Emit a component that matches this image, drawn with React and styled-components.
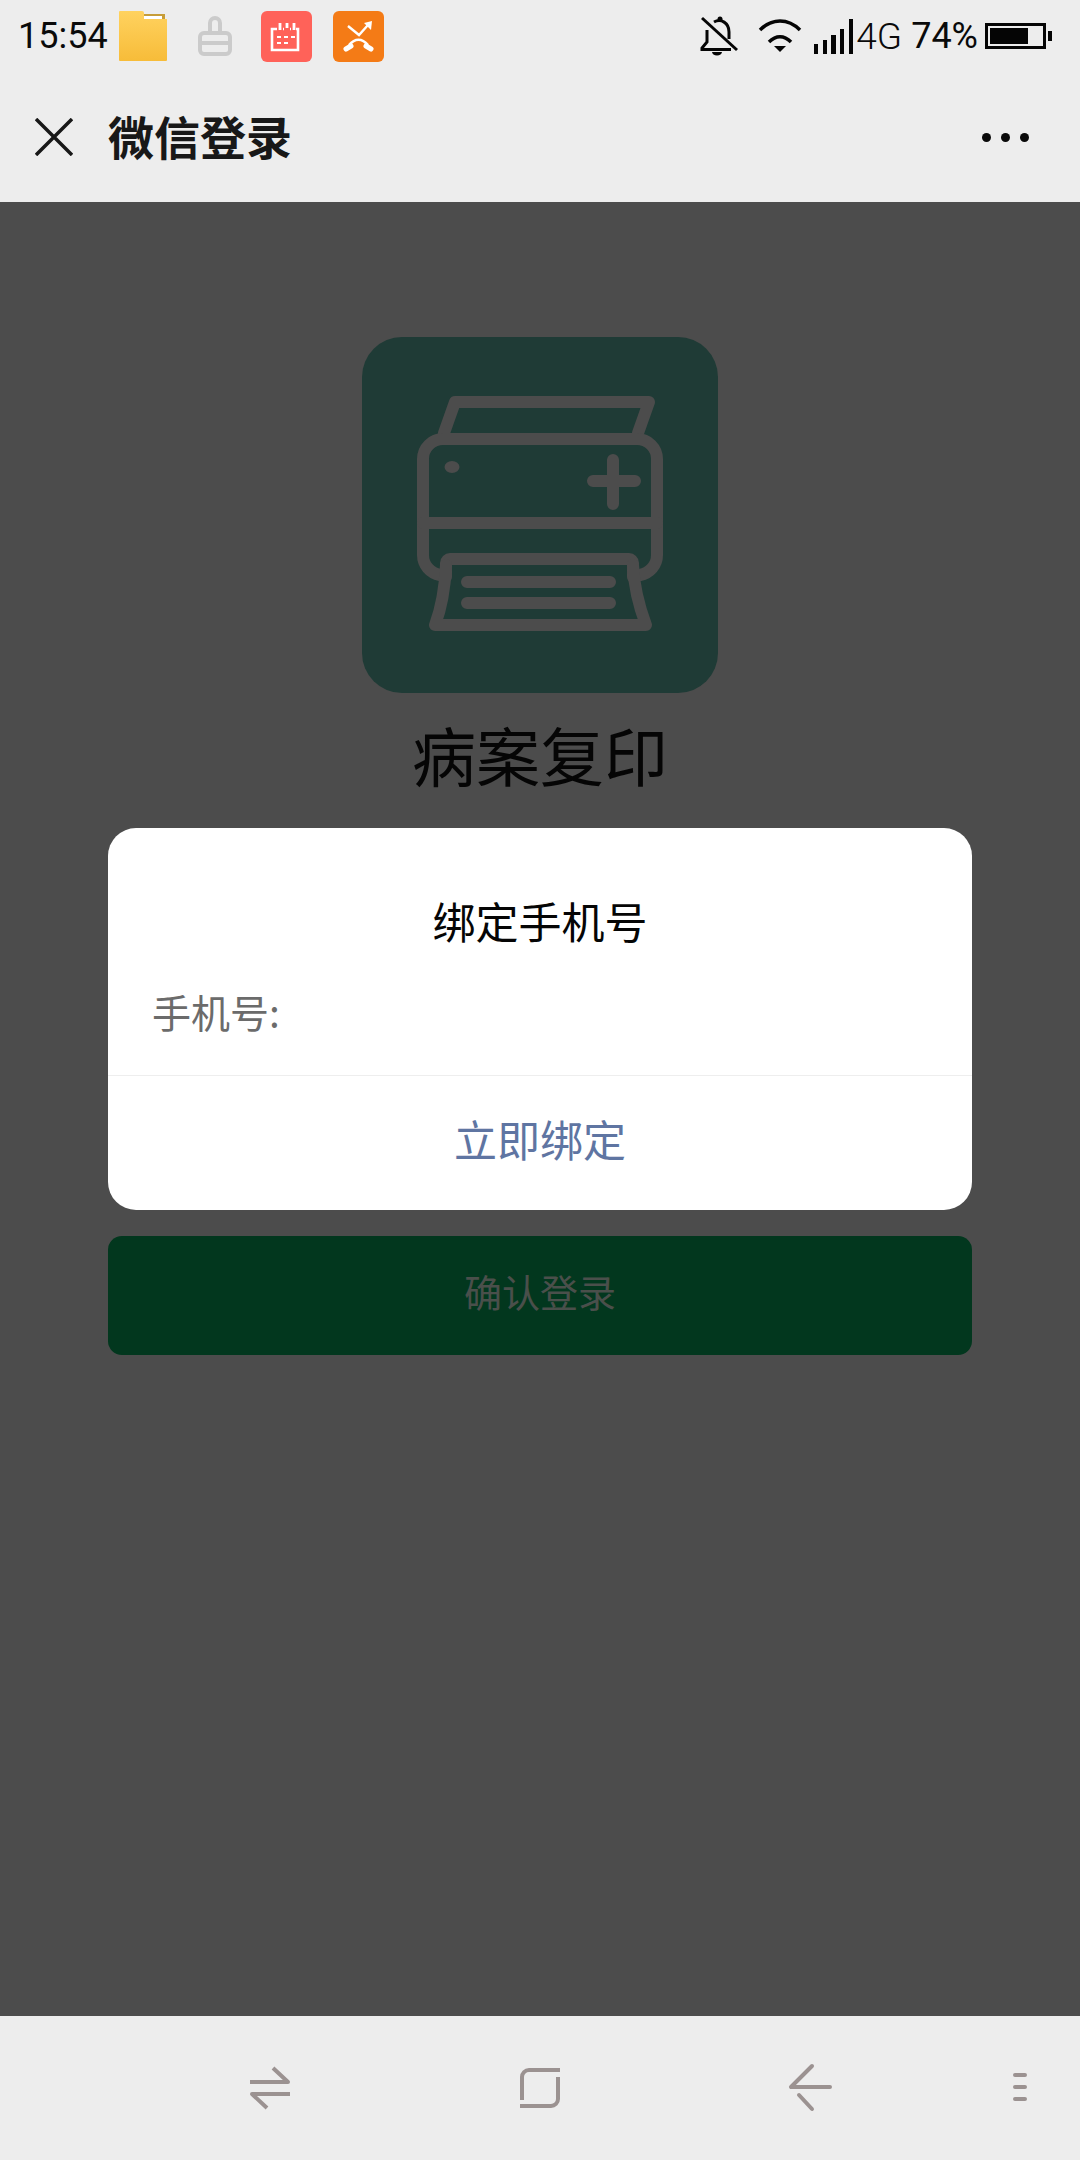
import styled, {createGlobalStyle} from "styled-components";

const GlobalStyle = createGlobalStyle`
  * {
    box-sizing: border-box;
  }
  body {
    margin: 0;
    font-family: "Noto Sans CJK SC", "Noto Sans", sans-serif;
  }
`;

const CJK = `"Noto Sans CJK SC", "Noto Sans", sans-serif`;

const Page = styled.div`
  position: relative;
  display: flex;
  flex-direction: column;
  width: 1080px;
  height: 2160px;
  overflow: hidden;
  background: #4c4c4c;
`;

const StatusBar = styled.div`
  display: flex;
  align-items: center;
  height: 72px;
  padding: 0 28px 0 18px;
  background: #ededed;
  color: #0a0a0a;
`;

const Time = styled.span`
  width: 99px;
  font: 400 36px/1 Roboto, sans-serif;
`;

const NotifyIcons = styled.div`
  display: flex;
  align-items: center;
  gap: 21px;
`;

const NotifySlot = styled.div`
  display: flex;
  justify-content: center;
  width: 51px;
`;

const SystemIcons = styled.div`
  display: flex;
  align-items: center;
  margin-left: auto;
`;

const SysIcon = styled.svg`
  display: block;
  flex: none;
  margin-left: ${(p) => p.$left || 0}px;
`;

const SysText = styled.span`
  margin-left: ${(p) => p.$left || 0}px;
  font: ${(p) => p.$weight || 400} ${(p) => p.$size || 36}px/1 Roboto, sans-serif;
`;

const NavBar = styled.div`
  display: flex;
  align-items: center;
  height: 130px;
  padding: 0 51px 0 35px;
  background: #ededed;
  color: #181818;
`;

const NavTitle = styled.h1`
  margin: 0 0 4px 35px;
  font: 700 46px/1 ${CJK};
`;

const MoreDots = styled.div`
  display: flex;
  gap: 10px;
  margin-left: auto;
`;

const Dot = styled.i`
  width: 9px;
  height: 9px;
  border-radius: 50%;
  background: #0a0a0a;
`;

const Main = styled.main`
  position: relative;
  flex: 1;
  display: flex;
  flex-direction: column;
  align-items: center;
  padding: 135px 108px 0;
  background: #4c4c4c;
`;

const Logo = styled.div`
  width: 356px;
  height: 356px;
  border-radius: 40px;
  background: #1f3b36;
`;

const AppName = styled.div`
  margin-top: 14px;
  color: #050505;
  font: 400 64px/92px ${CJK};
`;

const ConfirmButton = styled.button`
  width: 100%;
  height: 119px;
  margin-top: 437px;
  padding: 0 0 9px;
  border: 0;
  border-radius: 14px;
  background: #02371e;
  color: #4a4f4b;
  font: 400 38px/1 ${CJK};
`;

const Dialog = styled.div`
  position: absolute;
  top: 626px;
  left: 108px;
  width: 864px;
  height: 382px;
  display: flex;
  flex-direction: column;
  border-radius: 28px;
  background: #fff;
`;

const DialogTitle = styled.div`
  margin-top: 62px;
  color: #050505;
  text-align: center;
  font: 400 43px/60px ${CJK};
`;

const FieldRow = styled.div`
  display: flex;
  align-items: center;
  height: 60px;
  margin-top: 31px;
  padding-left: 44px;
  color: #6b6b6b;
  font: 400 39px/1 ${CJK};
`;

const DialogAction = styled.div`
  display: flex;
  align-items: center;
  justify-content: center;
  flex: 1;
  margin-top: 34px;
  padding-bottom: 10px;
  border-top: 1px solid #eeeeee;
  color: #5f75a2;
  font: 400 43px/1 ${CJK};
`;

const BottomBar = styled.div`
  display: flex;
  align-items: center;
  height: 144px;
  padding-left: 250px;
  background: #ededed;
`;

const SoftKey = styled.svg`
  display: block;
  flex: none;
  overflow: visible;
  margin-left: ${(p) => p.$left || 0}px;
`;

const FolderIcon = () => (
  <svg width="48" height="50" viewBox="0 0 48 50">
    <defs>
      <linearGradient id="folderFill" x1="0" y1="0" x2="0" y2="1">
        <stop offset="0" stopColor="#ffd25f" />
        <stop offset="1" stopColor="#f7bc39" />
      </linearGradient>
    </defs>
    <path d="M24 3h22v6H24z" fill="#c79d38" />
    <path d="M24 5h19v4H24z" fill="#fff" />
    <path d="M1 0h22a2 2 0 0 1 2 2v6h23v41a1 1 0 0 1-1 1H1a1 1 0 0 1-1-1V1a1 1 0 0 1 1-1z" fill="url(#folderFill)" />
  </svg>
);

const BrushIcon = () => (
  <svg width="34" height="40" viewBox="0 0 34 40" fill="none" stroke="#cbcbcb" strokeWidth="4">
    <rect x="2" y="17" width="30" height="21" rx="4" />
    <path d="M12 17V7a5 5 0 0 1 10 0v10M2 27h30" />
  </svg>
);

const CalendarApp = () => (
  <svg width="51" height="51" viewBox="0 0 51 51">
    <rect width="51" height="51" rx="6" fill="#ff6259" />
    <g fill="none" stroke="#fff" strokeWidth="2.6">
      <path d="M16 18h-5v21h26V18h-2M22 18h1M29 18h1" />
      <path d="M19 12v7M26 12v5M33 12v7" strokeWidth="2.8" />
      <path d="M16 26h4M23 26h4M30 26h4M16 32h4M23 32h4" strokeWidth="2.2" />
    </g>
  </svg>
);

const CallApp = () => (
  <svg width="51" height="51" viewBox="0 0 51 51">
    <rect width="51" height="51" rx="6" fill="#f47b16" />
    <path d="M15 15l11 9 9-10" fill="none" stroke="#fff" strokeWidth="2.400" />
    <path d="M31 12l8-2-1 9z" fill="#fff" />
    <path d="M16 34c6-7 13-7 19 0" fill="none" stroke="#fff" strokeWidth="2.500" />
    <path d="M13 38l5-3M38 38l-5-3" fill="none" stroke="#fff" strokeWidth="5" strokeLinecap="round" />
  </svg>
);

const BellOff = () => (
  <SysIcon width="38" height="40" viewBox="0 0 38 40" fill="none" stroke="#050505" strokeWidth="3">
    <path d="M2 2l35 32" />
    <path d="M7 14v12l-5 6v1.500h29" />
    <path d="M14 6c7-4 15 1 15 10v7" />
    <path d="M12 36h10a5 3.500 0 0 1-10 0z" fill="#050505" stroke="none" />
    <circle cx="20" cy="3" r="2.500" fill="#050505" stroke="none" />
  </SysIcon>
);

const Wifi = () => (
  <SysIcon $left={20} width="44" height="34" viewBox="0 0 44 34" fill="none" stroke="#050505" strokeWidth="3.500">
    <path d="M2 11c12-12 28-12 40 0" />
    <path d="M11 23c7-7 15-7 22 0" />
    <path d="M16 27h12l-6 6z" fill="#050505" stroke="none" />
  </SysIcon>
);

const Signal = () => (
  <SysIcon $left={12} width="40" height="35" viewBox="0 0 40 35" fill="#050505">
    <rect x="0" y="25" width="4" height="10" />
    <rect x="9" y="21" width="4" height="14" />
    <rect x="17" y="16" width="5" height="19" />
    <rect x="26" y="10" width="4" height="25" />
    <rect x="35" y="0" width="4" height="35" />
  </SysIcon>
);

const Battery = () => (
  <SysIcon $left={7} width="67" height="26" viewBox="0 0 67 26">
    <rect x="1.500" y="1.500" width="58" height="23" fill="none" stroke="#050505" strokeWidth="3" />
    <rect x="5" y="5" width="38" height="16" fill="#050505" />
    <rect x="63" y="8" width="4" height="10" fill="#050505" />
  </SysIcon>
);

const CloseIcon = () => (
  <svg width="38" height="38" viewBox="0 0 38 38" fill="none" stroke="#181818" strokeWidth="3.500">
    <path d="M1 1l36 36M37 1L1 37" />
  </svg>
);

const PrinterIcon = () => (
  <svg width="356" height="356" viewBox="0 0 356 356" fill="none" stroke="#4c4c4c" strokeWidth="12" strokeLinecap="round" strokeLinejoin="round">
    <path d="M82 96l11-31h194l-11 31" />
    <path d="M78 238c-10-2-17-10-17-20V122c0-11 9-20 20-20h194c11 0 20 9 20 20v96c0 10-7 18-17 20" />
    <path d="M61 186h234" />
    <ellipse cx="90" cy="130" rx="7.500" ry="6" fill="#4c4c4c" stroke="none" />
    <path d="M231 144h42M251 123v44" />
    <path d="M84 240v-14c0-2 2-4 4-4h179c2 0 4 2 4 4v14" />
    <path d="M84 228c-1 22-5 44-11 60h211c-6-16-12-38-13-60" />
    <path d="M105 245h143M105 266h143" />
  </svg>
);

const SwapKey = () => (
  <SoftKey width="40" height="44" viewBox="0 0 40 44" fill="none" stroke="#9b9291" strokeWidth="4">
    <path d="M0 16h38L23 2" strokeLinejoin="round" />
    <path d="M40 28H2l15 14" strokeLinejoin="round" />
  </SoftKey>
);

const HomeKey = () => (
  <SoftKey $left={230} width="40" height="40" viewBox="0 0 40 40" fill="none" stroke="#9b9291" strokeWidth="4">
    <path d="M40 2H9a7 7 0 0 0-7 7v23" />
    <path d="M0 38h31a7 7 0 0 0 7-7V9" />
  </SoftKey>
);

const BackKey = () => (
  <SoftKey $left={230} width="40" height="48" viewBox="0 0 40 48" fill="none" stroke="#9b9291" strokeWidth="4" strokeLinecap="round" strokeLinejoin="round">
    <path d="M22 2L1 23h39" />
    <path d="M9 31l13 14" />
  </SoftKey>
);

const MenuKey = () => (
  <SoftKey $left={170} width="40" height="30" viewBox="0 0 40 30" fill="none" stroke="#9b9291" strokeWidth="4" strokeLinecap="round">
    <path d="M15 2h10M15 14h10M15 26h10" />
  </SoftKey>
);

const App = () => {
  return (
    <Page>
      <GlobalStyle />
      <StatusBar>
        <Time>15:54</Time>
        <NotifyIcons>
          <NotifySlot>
            <FolderIcon />
          </NotifySlot>
          <NotifySlot>
            <BrushIcon />
          </NotifySlot>
          <NotifySlot>
            <CalendarApp />
          </NotifySlot>
          <NotifySlot>
            <CallApp />
          </NotifySlot>
        </NotifyIcons>
        <SystemIcons>
          <BellOff />
          <Wifi />
          <Signal />
          <SysText $left={2} $weight={300} $size={37}>4G</SysText>
          <SysText $left={9}>74%</SysText>
          <Battery />
        </SystemIcons>
      </StatusBar>
      <NavBar>
        <CloseIcon />
        <NavTitle>微信登录</NavTitle>
        <MoreDots>
          <Dot />
          <Dot />
          <Dot />
        </MoreDots>
      </NavBar>
      <Main>
        <Logo>
          <PrinterIcon />
        </Logo>
        <AppName>病案复印</AppName>
        <ConfirmButton>确认登录</ConfirmButton>
        <Dialog>
          <DialogTitle>绑定手机号</DialogTitle>
          <FieldRow>手机号:</FieldRow>
          <DialogAction>立即绑定</DialogAction>
        </Dialog>
      </Main>
      <BottomBar>
        <SwapKey />
        <HomeKey />
        <BackKey />
        <MenuKey />
      </BottomBar>
    </Page>
  );
};

export default App;
